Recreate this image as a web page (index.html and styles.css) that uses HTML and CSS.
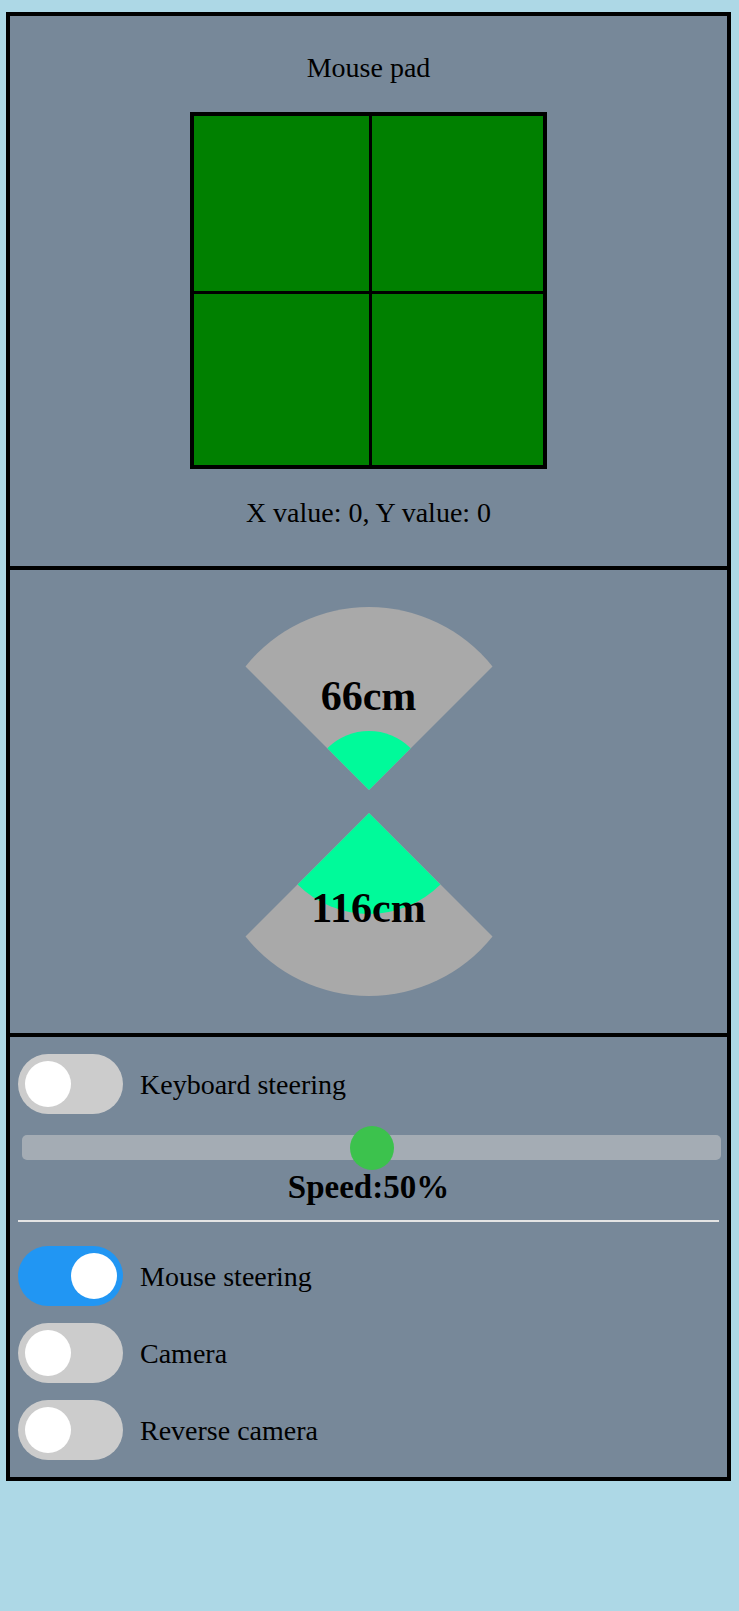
FILE: index.html
```html
<!DOCTYPE html>
<html lang="en">
<head>
<meta charset="utf-8">
<title>Robot control</title>
<link rel="stylesheet" href="styles.css">
</head>
<body>
<div class="panel">
  <section class="pad-section">
    <p class="caption">Mouse pad</p>
    <div class="pad">
      <div class="cell"></div>
      <div class="cell"></div>
      <div class="cell"></div>
      <div class="cell"></div>
    </div>
    <p class="caption">X value: 0, Y value: 0</p>
  </section>

  <section class="sensor-section">
    <div class="sensor sensor-front">
      <svg class="sensor-shape" width="248" height="183" viewBox="0 0 248 183">
        <path fill="#a9a9a9" d="M124 183 L0.5 59.5 A158 158 0 0 1 247.5 59.5 Z"/>
        <path fill="#00fa9a" d="M124 183 L82.3 141.3 A59 59 0 0 1 165.7 141.3 Z"/>
      </svg>
      <h2 class="distance">66cm</h2>
    </div>
    <div class="sensor sensor-back">
      <svg class="sensor-shape" width="248" height="183" viewBox="0 0 248 183">
        <path fill="#a9a9a9" d="M124 0 L0.5 123.5 A158 158 0 0 0 247.5 123.5 Z"/>
        <path fill="#00fa9a" d="M124 0 L52.6 71.4 A101 101 0 0 0 195.4 71.4 Z"/>
      </svg>
      <h2 class="distance">116cm</h2>
    </div>
  </section>

  <section class="control-section">
    <div class="toggle-row">
      <label class="switch"><input type="checkbox"><span class="track"></span></label>
      <span class="toggle-label">Keyboard steering</span>
    </div>
    <input class="speed" type="range" min="0" max="100" value="50">
    <h3 class="speed-label">Speed:50%</h3>
    <hr class="divider">
    <div class="toggle-list">
      <div class="toggle-row">
        <label class="switch"><input type="checkbox" checked><span class="track"></span></label>
        <span class="toggle-label">Mouse steering</span>
      </div>
      <div class="toggle-row">
        <label class="switch"><input type="checkbox"><span class="track"></span></label>
        <span class="toggle-label">Camera</span>
      </div>
      <div class="toggle-row">
        <label class="switch"><input type="checkbox"><span class="track"></span></label>
        <span class="toggle-label">Reverse camera</span>
      </div>
    </div>
  </section>
</div>
</body>
</html>
```

FILE: styles.css
```css
html, body {
  margin: 0;
  padding: 0;
  background: #add8e6;
  min-height: 1611px;
  font-family: "Liberation Serif", "Times New Roman", serif;
  color: #000;
}

.panel {
  box-sizing: border-box;
  width: 725px;
  margin: 12px 0 0 6px;
  border: 4px solid #000;
  background: #778899;
  display: flex;
  flex-direction: column;
}

/* Section 1: mouse pad */
.pad-section {
  display: flex;
  flex-direction: column;
  align-items: center;
  padding: 36px 0 37px;
  gap: 28px;
  border-bottom: 4px solid #000;
}

.caption {
  margin: 0;
  font-size: 28px;
  line-height: 32px;
}

.pad {
  box-sizing: border-box;
  width: 357px;
  height: 357px;
  border: 4px solid #000;
  background: #000;
  display: grid;
  grid-template-columns: 175px 171px;
  grid-template-rows: 175px 171px;
  gap: 3px;
}

.cell {
  background: #008000;
}

/* Section 2: distance sensors */
.sensor-section {
  display: flex;
  flex-direction: column;
  align-items: center;
  gap: 23px;
  padding: 37px 0;
  border-bottom: 4px solid #000;
}

.sensor {
  display: grid;
  justify-items: center;
  width: 248px;
  height: 183px;
}

.sensor > * {
  grid-area: 1 / 1;
}

.sensor-shape {
  display: block;
}

.distance {
  margin: 0;
  align-self: start;
  font-size: 42px;
  font-weight: bold;
  line-height: 48px;
}

.sensor-front .distance {
  margin-top: 65px;
}

.sensor-back .distance {
  margin-top: 71px;
}

/* Section 3: controls */
.control-section {
  display: flex;
  flex-direction: column;
  padding: 17px 8px;
}

.toggle-list {
  display: flex;
  flex-direction: column;
  gap: 17px;
  margin-top: 24px;
}

.toggle-row {
  display: flex;
  align-items: center;
  gap: 17px;
  height: 60px;
}

.toggle-label {
  font-size: 28px;
  line-height: 32px;
  padding-top: 2px;
}

.switch {
  display: inline-block;
  width: 105px;
  height: 60px;
  flex: none;
}

.switch input {
  opacity: 0;
  width: 0;
  height: 0;
  margin: 0;
  position: absolute;
}

.track {
  position: relative;
  display: block;
  width: 105px;
  height: 60px;
  border-radius: 30px;
  background: #cccccc;
}

.track::before {
  content: "";
  position: absolute;
  left: 7px;
  top: 7px;
  width: 46px;
  height: 46px;
  border-radius: 50%;
  background: #ffffff;
}

.switch input:checked + .track {
  background: #2196f3;
}

.switch input:checked + .track::before {
  transform: translateX(46px);
}

.speed {
  -webkit-appearance: none;
  appearance: none;
  display: block;
  box-sizing: border-box;
  width: 699px;
  height: 25px;
  margin: 21px 0 0 4px;
  padding: 0;
  border: none;
  border-radius: 5px;
  background: #a4acb4;
  outline: none;
}

.speed::-webkit-slider-thumb {
  -webkit-appearance: none;
  appearance: none;
  width: 44px;
  height: 44px;
  border: none;
  border-radius: 50%;
  background: #3cc24d;
}

.speed-label {
  margin: 8px 0 0;
  text-align: center;
  font-size: 33px;
  font-weight: bold;
  line-height: 38px;
}

.divider {
  margin: 14px 0 0;
  height: 0;
  border: none;
  border-top: 2px solid #e4e4e4;
}
```
